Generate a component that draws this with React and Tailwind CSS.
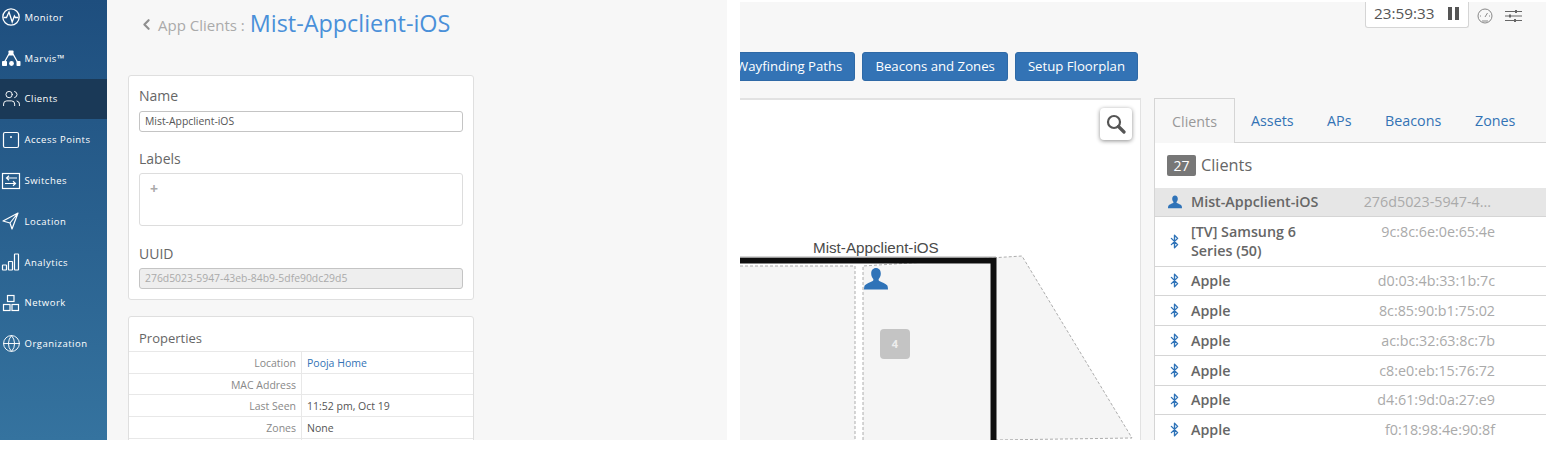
import { Bluetooth, ChevronLeft, Users, Globe } from 'lucide-react';

const sans = "font-['Open_Sans',sans-serif]";

const MonitorIcon = () => (
  <svg width="20" height="20" viewBox="0 0 20 20" fill="none" stroke="white" strokeWidth="1.3">
    <circle cx="10" cy="10" r="8.2" />
    <path d="M2.5 10.5h3L8 5l3.2 10 2.2-6 1 1.5h3" />
  </svg>
);
const MarvisIcon = () => (
  <svg width="20" height="20" viewBox="0 0 20 20" fill="white">
    <rect x="7.5" y="2.5" width="5" height="5" rx="0.8" />
    <rect x="1" y="13" width="5" height="5" rx="0.8" />
    <circle cx="10.5" cy="15.5" r="2.4" />
    <rect x="15.5" y="13" width="4" height="5" rx="0.8" />
    <path d="M8 6L3.5 14M12 6l4.5 8" stroke="white" strokeWidth="1.3" />
  </svg>
);
const ApIcon = () => (
  <svg width="20" height="20" viewBox="0 0 20 20" fill="none" stroke="white" strokeWidth="1.2">
    <rect x="2.5" y="2.5" width="15" height="15" rx="1.5" />
    <circle cx="10" cy="7" r="1" fill="white" stroke="none" />
  </svg>
);
const SwitchIcon = () => (
  <svg width="20" height="20" viewBox="0 0 20 20" fill="none" stroke="white" strokeWidth="1.2">
    <rect x="1.500" y="2.500" width="17" height="15" />
    <path d="M16 7H5.500M8 4.800L5.500 7 8 9.200M4 12.500h10.500M12 10.300l2.500 2.200-2.500 2.200" />
  </svg>
);
const LocationIcon = () => (
  <svg width="20" height="20" viewBox="0 0 20 20" fill="none" stroke="white" strokeWidth="1.2" strokeLinejoin="round">
    <path d="M17 2L2 10l7 2 2 6zM9 12l8-10" />
  </svg>
);
const AnalyticsIcon = () => (
  <svg width="20" height="20" viewBox="0 0 20 20" fill="none" stroke="white" strokeWidth="1.2">
    <rect x="1.500" y="13" width="4" height="5" rx="0.5" />
    <rect x="7.500" y="9.500" width="4" height="8.500" rx="0.5" />
    <rect x="13.500" y="2" width="4" height="16" rx="0.5" />
  </svg>
);
const NetworkIcon = () => (
  <svg width="20" height="20" viewBox="0 0 20 20" fill="none" stroke="white" strokeWidth="1.2">
    <rect x="6.500" y="2.500" width="6.500" height="6" />
    <rect x="2.500" y="11.500" width="6.500" height="6" />
    <rect x="11" y="11.500" width="6.500" height="6" />
  </svg>
);
const PersonIcon = ({ size }) => (
  <svg width={size} height={size} viewBox="0 0 24 24" fill="#2f73b8">
    <path d="M12 1c3 0 4.800 2.300 4.800 5.400 0 2.300-.9 4.100-1.900 5.300-.5.7-.4 1.800.4 2.200 2.500 1.200 6.500 2.700 8 4.500.4.700.700 2.600.700 4.100H0c0-1.500.3-3.400.7-4.100 1.500-1.800 5.500-3.300 8-4.500.8-.4.9-1.500.4-2.200-1-1.200-1.900-3-1.900-5.300C7.200 3.300 9 1 12 1z" />
  </svg>
);

const navItems = [
  { label: 'Monitor', icon: <MonitorIcon /> },
  { label: 'Marvis™', icon: <MarvisIcon /> },
  { label: 'Clients', icon: <Users size={19} color="white" strokeWidth={1.2} />, active: true },
  { label: 'Access Points', icon: <ApIcon /> },
  { label: 'Switches', icon: <SwitchIcon /> },
  { label: 'Location', icon: <LocationIcon /> },
  { label: 'Analytics', icon: <AnalyticsIcon /> },
  { label: 'Network', icon: <NetworkIcon /> },
  { label: 'Organization', icon: <Globe size={19} color="white" strokeWidth={1.2} /> },
];

const properties = [
  { name: 'Location', value: 'Pooja Home', link: true },
  { name: 'MAC Address', value: '' },
  { name: 'Last Seen', value: '11:52 pm, Oct 19' },
  { name: 'Zones', value: 'None' },
];

const macs = [
  'd0:03:4b:33:1b:7c',
  '8c:85:90:b1:75:02',
  'ac:bc:32:63:8c:7b',
  'c8:e0:eb:15:76:72',
  'd4:61:9d:0a:27:e9',
  'f0:18:98:4e:90:8f',
];

const Sidebar = () => (
  <div className="w-[107px] shrink-0 bg-gradient-to-b from-[#1e4e7e] to-[#35739f] overflow-hidden">
    <div className="-mt-[3px]">
      {navItems.map((item) => (
        <div
          key={item.label}
          className={`h-[40.8px] flex items-center pl-[1px] gap-[3.5px] text-[9.5px] tracking-[0.5px] text-white ${item.active ? 'bg-[#1a3957]' : ''}`}
        >
          <span className="w-[20px] h-[20px] flex items-center justify-center">{item.icon}</span>
          <span className="pt-[1px]">{item.label}</span>
        </div>
      ))}
    </div>
  </div>
);

const DetailsPage = () => (
  <div className={`w-[727px] h-[440px] shrink-0 flex overflow-hidden bg-[#f7f7f7] ${sans}`}>
    <Sidebar />
    <div className="w-[367px] pl-[21px] pt-[6px]">
      <div className="h-[69px] flex items-start pl-[10px]">
        <ChevronLeft size={17} strokeWidth={3} className="text-[#8f8f8f] mt-[10px] mr-[3px]" />
        <span className="text-[15px] text-[#aaa] mt-[8px] mr-[5px]">App Clients :</span>
        <span className="text-[23.4px] leading-[34px] text-[#4a90d9]">Mist-Appclient-iOS</span>
      </div>
      <div className="w-[346px] h-[225px] bg-white border border-[#dfdfdf] rounded-[3px] px-[10px] pt-[10px]">
        <div className="text-[14px] leading-[20px] text-[#666]">Name</div>
        <div className="mt-[5px] h-[21px] border border-[#c4c4c4] rounded-[3px] px-[5px] text-[10.4px] leading-[19px] text-[#555]">Mist-Appclient-iOS</div>
        <div className="mt-[17px] text-[14px] leading-[20px] text-[#666]">Labels</div>
        <div className="mt-[4px] h-[53px] border border-[#ddd] rounded-[3px] pl-[10px] text-[14px] leading-[30px] font-bold text-[#aaa]">+</div>
        <div className="mt-[18px] text-[14px] leading-[20px] text-[#666]">UUID</div>
        <div className="mt-[4px] h-[21px] border border-[#c4c4c4] rounded-[3px] bg-[#eeeeee] px-[5px] text-[10.4px] leading-[19px] text-[#aaa]">276d5023-5947-43eb-84b9-5dfe90dc29d5</div>
      </div>
      <div className="mt-[16px] w-[346px] bg-white border border-[#dfdfdf] rounded-t-[3px]">
        <div className="h-[34px] px-[10px] pt-[13px] text-[13px] leading-[16px] text-[#666]">Properties</div>
        {properties.map((row) => (
          <div key={row.name} className="h-[21.7px] flex border-t border-[#e8e8e8] text-[10.5px] leading-[23px]">
            <div className="w-[173px] pr-[5px] text-right text-[#888] border-r border-[#e8e8e8]">{row.name}</div>
            <div className={`pl-[5px] ${row.link ? 'text-[#3373b5]' : 'text-[#555]'}`}>{row.value}</div>
          </div>
        ))}
        <div className="h-[21.7px] flex border-t border-[#e8e8e8]">
          <div className="w-[173px] border-r border-[#e8e8e8]" />
        </div>
      </div>
    </div>
  </div>
);

const FloorMap = () => (
  <div className="relative w-[401px] h-full shrink-0 bg-white border-t-2 border-r border-[#e2e2e2] overflow-hidden">
    <svg className="absolute left-0 top-0" width="400" height="340" viewBox="0 0 400 340" fill="#f5f5f5">
      <path d="M0 166H115V340H0Z" />
      <path d="M123 166L250 163V340H123Z" />
      <path d="M256 158L282 156L392 338L256 340Z" />
      <g fill="none" stroke="#999" strokeWidth="0.8" strokeDasharray="3 2">
        <path d="M0 166H115V340" />
        <path d="M123 340V166L282 156L392 338L256 340" />
      </g>
      <path d="M0 160.500H253.500V340" fill="none" stroke="#0e0e0e" strokeWidth="6" />
      <path d="M0 157H256" fill="none" stroke="#aaa" strokeWidth="1" />
    </svg>
    <div className="absolute left-[73px] top-[139px] text-[15.2px] leading-[18px] text-[#4a4a4a] font-['Liberation_Sans',sans-serif]">Mist-Appclient-iOS</div>
    <div className="absolute left-[124px] top-[167px]">
      <PersonIcon size={24} />
    </div>
    <div className="absolute left-[140px] top-[229px] w-[30px] h-[30px] rounded-[4px] bg-[#c4c4c4] flex items-center justify-center text-[11px] font-bold text-[#eee]">4</div>
    <div className="absolute right-[8px] top-[8px] w-[32px] h-[32px] bg-white rounded-[4px] shadow-[0_1px_4px_rgba(0,0,0,0.45)] flex items-center justify-center">
      <svg width="20" height="20" viewBox="0 0 20 20" fill="none" stroke="#555">
        <circle cx="8" cy="8" r="6" strokeWidth="2.200" />
        <path d="M12.500 12.500L18 18" strokeWidth="3.200" strokeLinecap="round" />
      </svg>
    </div>
  </div>
);

const ClientList = () => (
  <div className="flex-1 min-w-0 h-full">
    <div className="h-[45px] flex text-[14.300px]">
      <div className="w-[81px] h-[45px] bg-[#f7f7f7] border border-b-0 border-[#d5d5d5] flex items-center justify-center pt-[2px] text-[#999] relative z-10">Clients</div>
      <div className="flex-1 border-b border-[#d5d5d5] text-[#3373b5] leading-[45px] relative">
        <span className="absolute left-[16px]">Assets</span>
        <span className="absolute left-[92px]">APs</span>
        <span className="absolute left-[150px]">Beacons</span>
        <span className="absolute left-[240px]">Zones</span>
      </div>
    </div>
    <div className="bg-white border-l border-[#d5d5d5] -mt-px">
      <div className="h-[46px] flex items-center pl-[12px] pt-[1px]">
        <span className="w-[29px] h-[21px] bg-[#777] rounded-[2px] text-white text-[14px] leading-[21px] text-center">27</span>
        <span className="ml-[5px] text-[16.300px] text-[#666]">Clients</span>
      </div>
      <div className="h-[29px] flex items-center bg-[#e6e6e6] border-b border-[#d5d5d5] pl-[13px] text-[14.300px]">
        <PersonIcon size={14} />
        <span className="ml-[9px] font-semibold text-[#666]">Mist-Appclient-iOS</span>
        <span className="ml-auto mr-[55px] text-[#aaa]">276d5023-5947-4...</span>
      </div>
      <div className="h-[49.500px] flex items-center border-b border-[#d5d5d5] pl-[12px] text-[14.300px]">
        <Bluetooth size={15} strokeWidth={2.200} className="text-[#2f73b8] shrink-0" />
        <span className="ml-[9px] w-[140px] font-semibold leading-[19.500px] text-[#666]">[TV] Samsung 6 Series (50)</span>
        <span className="ml-auto mr-[51px] self-start pt-[4px] text-[#aaa]">9c:8c:6e:0e:65:4e</span>
      </div>
      {macs.map((mac) => (
        <div key={mac} className="h-[29.800px] flex items-center border-b border-[#d5d5d5] pl-[12px] text-[14.300px]">
          <Bluetooth size={15} strokeWidth={2.200} className="text-[#2f73b8] shrink-0" />
          <span className="ml-[9px] font-semibold text-[#666]">Apple</span>
          <span className="ml-auto mr-[51px] text-[#aaa]">{mac}</span>
        </div>
      ))}
    </div>
  </div>
);

const MapPage = () => (
  <div className={`ml-[13px] mt-[2px] flex-1 min-w-0 h-[438px] bg-[#f7f7f7] overflow-hidden ${sans}`}>
    <div className="h-[27px] flex justify-end items-center pr-[24px]">
      <div className="w-[104px] h-[28px] -mt-[3px] bg-white border border-t-0 border-[#d5d5d5] rounded-b-[3px] flex items-center pl-[8px] text-[15.300px] text-[#555]">
        23:59:33
        <span className="ml-[13px] w-[4px] h-[13px] bg-[#555]" />
        <span className="ml-[3px] w-[4px] h-[13px] bg-[#555]" />
      </div>
      <svg className="ml-[7px]" width="18" height="16" viewBox="0 0 18 16" fill="none" stroke="#888" strokeWidth="1">
        <circle cx="9" cy="8" r="7" />
        <path d="M9 9l2.500-4M4 8h1M13 8h1M6 13h6" />
      </svg>
      <svg className="ml-[11px]" width="17" height="14" viewBox="0 0 17 14" fill="none" stroke="#666" strokeWidth="1.200">
        <path d="M0 2.500h17M0 7h17M0 11.500h17" />
        <path d="M11 1v3M5 5.500v3M10 10v3" strokeWidth="2" />
      </svg>
    </div>
    <div className="mt-[23px] h-[29px] flex justify-end gap-[7px] pr-[408px] text-[13.200px]">
      {['Wayfinding Paths', 'Beacons and Zones', 'Setup Floorplan'].map((label) => (
        <button key={label} className="h-[29px] shrink-0 px-[12px] bg-[#3373b5] border border-[#2e69a6] rounded-[3px] text-white">{label}</button>
      ))}
    </div>
    <div className="mt-[17px] flex gap-[13px] h-[342px]">
      <FloorMap />
      <ClientList />
    </div>
  </div>
);

const App = () => (
  <div className="w-[1546px] h-[452px] bg-white flex overflow-hidden">
    <DetailsPage />
    <MapPage />
  </div>
);

export default App;
